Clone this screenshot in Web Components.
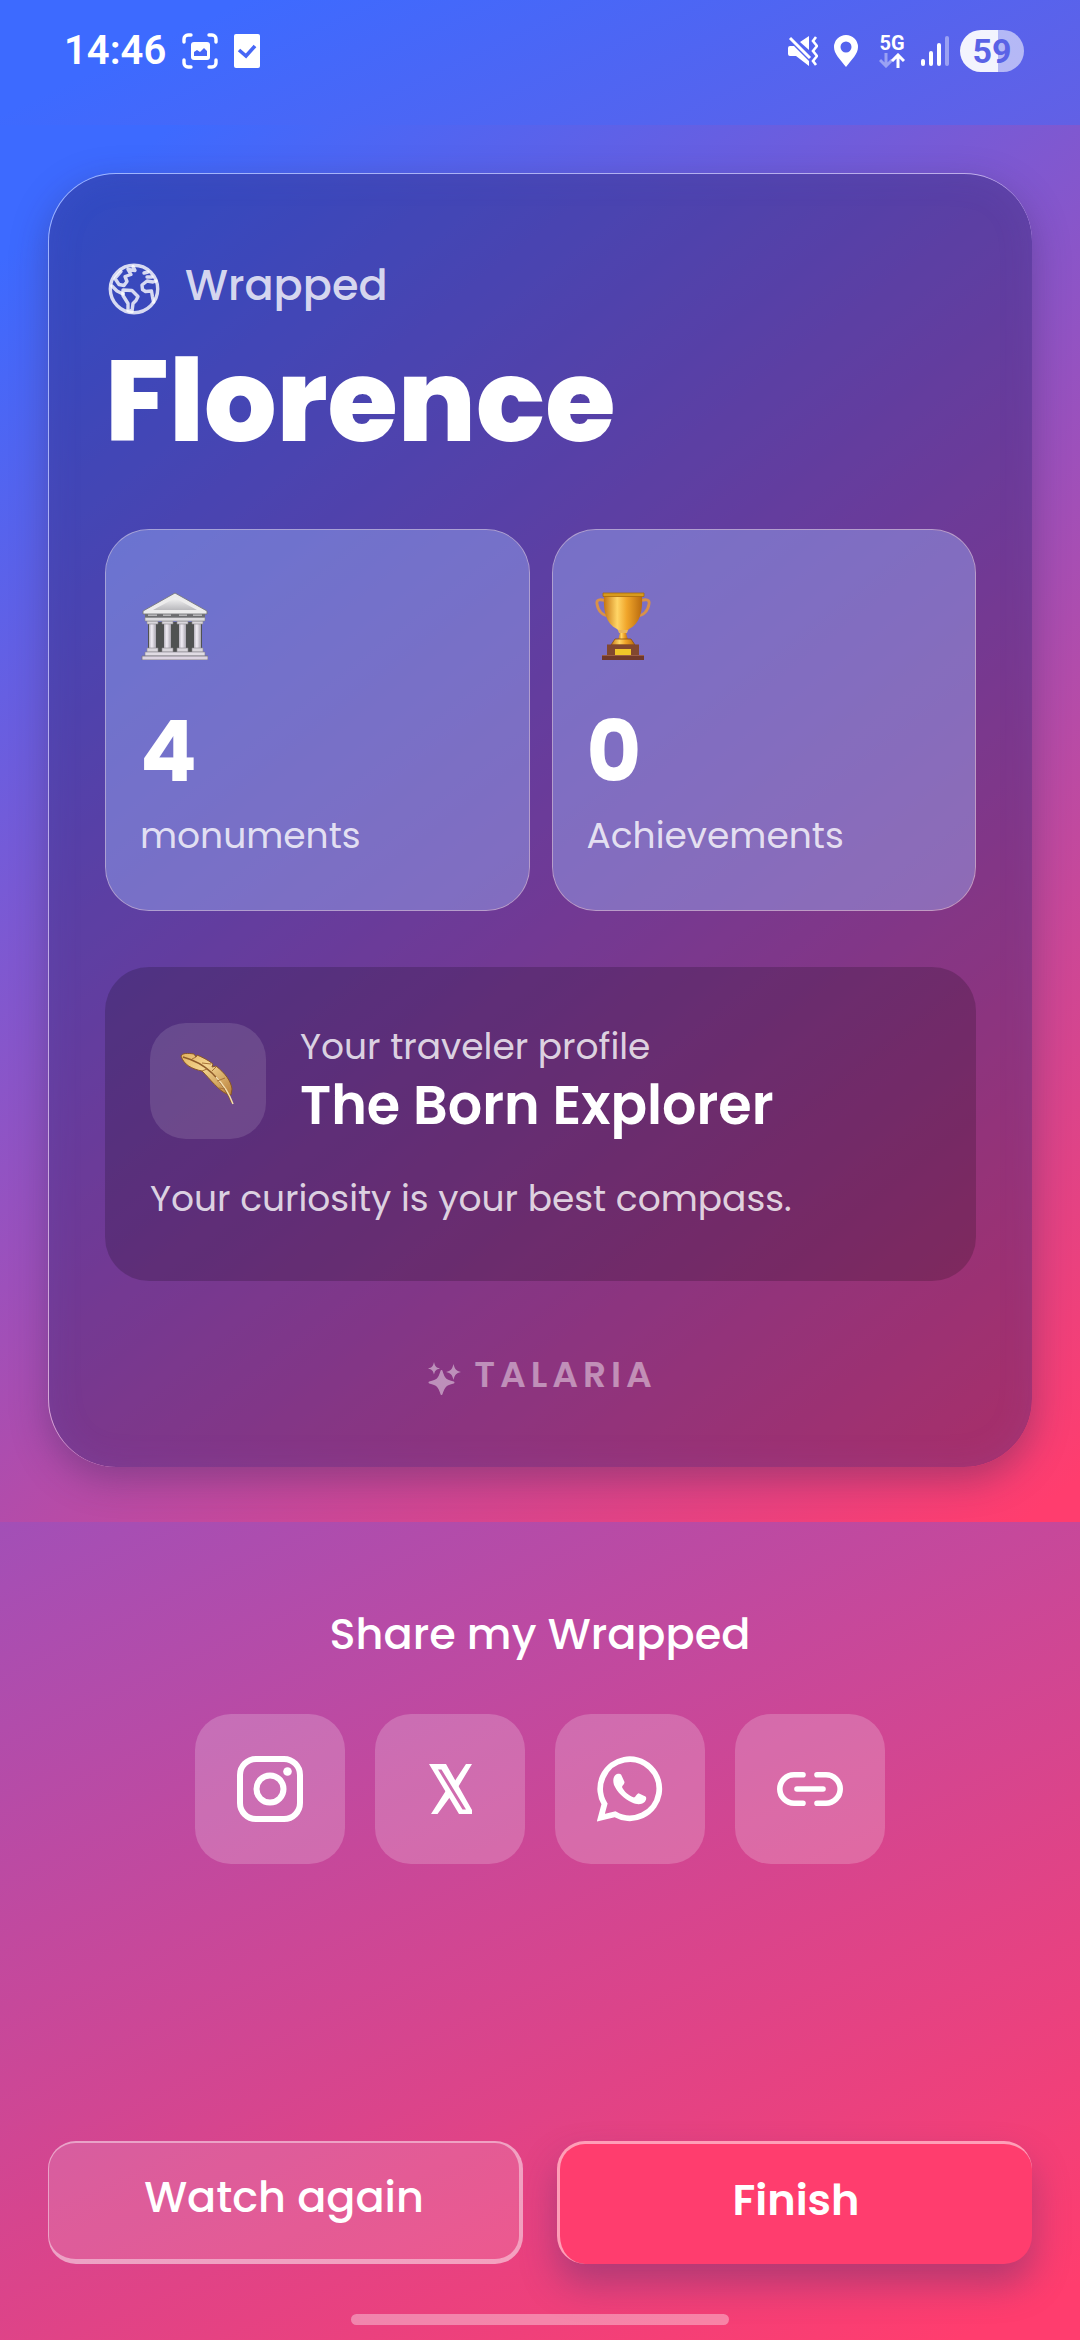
<!DOCTYPE html>
<html lang="en">
<head>
<meta charset="UTF-8">
<meta name="viewport" content="width=device-width, initial-scale=1">
<title>Florence Wrapped</title>
<style>
    :root {
        --blue: #3d6aff;
        --purple: #9d50bb;
        --pink: #ff3d6e;
        --soft: rgba(255, 255, 255, 0.8);
    }
    body {
        margin: 0;
        min-height: 100vh;
        display: flex;
        flex-direction: column;
        color: #fff;
        font-family: Poppins, Inter, sans-serif;
        background: linear-gradient(155deg, var(--blue) 4%, var(--purple) 51%, var(--pink) 98%);
    }
    main {
        flex: 1;
        display: flex;
        flex-direction: column;
    }
    svg { display: block; }
</style>
</head>
<body>
<status-bar time="14:46" battery="59"></status-bar>
<main>
    <wrapped-card label="Wrapped" city="Florence" brand="TALARIA">
        <stat-tile value="4" label="monuments">
            <svg width="68" height="68" viewBox="0 0 68 68" aria-hidden="true">
                <defs>
                    <linearGradient id="stone" x1="0" y1="0" x2="0" y2="1">
                        <stop offset="0" stop-color="#f2f2f2"/>
                        <stop offset="1" stop-color="#b9b9bd"/>
                    </linearGradient>
                    <linearGradient id="column" x1="0" y1="0" x2="1" y2="0">
                        <stop offset="0" stop-color="#b8b4be"/>
                        <stop offset="0.4" stop-color="#f1edf5"/>
                        <stop offset="1" stop-color="#aaa6b0"/>
                    </linearGradient>
                </defs>
                <path d="M8 30h54v30H8z" fill="#505252"/>
                <g fill="url(#column)">
                    <path d="M9 31h7v28H9z"/>
                    <path d="M24 31h7v28h-7z"/>
                    <path d="M39 31h7v28h-7z"/>
                    <path d="M54 31h7v28h-7z"/>
                </g>
                <g fill="#d9d6dc" stroke="#8d8a92" stroke-width="0.6">
                    <path d="M7 29h11v3H7zM22 29h11v3H22zM37 29h11v3H37zM52 29h11v3H52z"/>
                    <path d="M7 56h11v4H7zM22 56h11v4H22zM37 56h11v4H37zM52 56h11v4H52z"/>
                </g>
                <path d="M5 22h60v4H5z" fill="#6d6e70"/>
                <path d="M8 23h9M23 23h8M39 23h8M53 23h9" stroke="#b7b7b9" stroke-width="2"/>
                <path d="M5 25.500h60v3.500H5z" fill="#dcdbde" stroke="#858488" stroke-width="0.6"/>
                <path d="M35 1L67 19v3H3v-3z" fill="#ececec" stroke="#77787a" stroke-width="0.9"/>
                <path d="M35 6L57 18H13z" fill="url(#stone)"/>
                <path d="M5 60h60v4H5z" fill="#e0dce4" stroke="#85828a" stroke-width="0.6"/>
                <path d="M2 64h66v4H2z" fill="#dcd4e2" stroke="#77747c" stroke-width="0.8"/>
            </svg>
        </stat-tile>
        <stat-tile value="0" label="Achievements">
            <svg width="68" height="68" viewBox="0 0 68 68" aria-hidden="true">
                <defs>
                    <linearGradient id="gold" x1="0" y1="0" x2="1" y2="0">
                        <stop offset="0" stop-color="#c67512"/>
                        <stop offset="0.35" stop-color="#ffd566"/>
                        <stop offset="0.6" stop-color="#f0a52a"/>
                        <stop offset="1" stop-color="#b86a0e"/>
                    </linearGradient>
                </defs>
                <path d="M18 8.500C13 7 9 7.500 10 12c1 7 6 12 12 12" fill="none" stroke="#d8914a" stroke-width="2.800"/>
                <path d="M54 8.500c5-1.500 9-1 8 3.500-1 7-6 12-12 12" fill="none" stroke="#d8914a" stroke-width="2.800"/>
                <path d="M17 3h38c1 16-2 29-13 34l-3 3h-6l-3-3C19 32 16 19 17 3z" fill="url(#gold)"/>
                <path d="M16 1h41v3.500H16z" fill="#d89a1c" stroke="#a8690b" stroke-width="0.8"/>
                <path d="M31 38h10l-1 3h-8z" fill="#e9b65c"/>
                <path d="M33 41h6l2 7H31z" fill="url(#gold)"/>
                <path d="M28 47h16l4 6H24z" fill="url(#gold)" stroke="#8a4c0c" stroke-width="0.8"/>
                <path d="M20 52.500h32V65H20z" fill="#82472f"/>
                <path d="M15 63h42v5H15z" fill="#70382a"/>
                <path d="M15 63.500h42" stroke="#9b5c45" stroke-width="1"/>
                <path d="M28 57h16v6H28z" fill="#f0c429"/>
            </svg>
        </stat-tile>
        <traveler-profile slot="profile" label="Your traveler profile" name="The Born Explorer">
            <svg slot="icon" width="56" height="56" viewBox="0 0 56 56" aria-hidden="true">
                <defs>
                    <linearGradient id="feather" x1="0" y1="0" x2="1" y2="1">
                        <stop offset="0" stop-color="#e3b25f"/>
                        <stop offset="0.4" stop-color="#f3d490"/>
                        <stop offset="1" stop-color="#b9803a"/>
                    </linearGradient>
                </defs>
                <path d="M1 3C2 0 8 0 14 1l2 3 1-2c5 2 11 5 16 9l-1 3 4-1c9 7 15 15 16 23l-1 6-4-1c-8-3-17-15-25-23C12 16 4 12 1 3z" fill="url(#feather)" stroke="#8a5626" stroke-width="1"/>
                <path d="M3 4c15 4 36 15 49 46" fill="none" stroke="#8f5b2a" stroke-width="1.500"/>
                <path d="M36 24c8 8 13 16 17 27" fill="none" stroke="#f4dfae" stroke-width="1.500"/>
                <path d="M12 6l4-2M22 10l9 1M32 18l4-4M22 18l5-2M37 28l8-3M39 35l6 1" stroke="#a87338" stroke-width="1"/>
            </svg>
            Your curiosity is your best compass.
        </traveler-profile>
    </wrapped-card>

    <share-section heading="Share my Wrapped">
        <share-button label="Instagram">
            <svg width="66" height="66" viewBox="0 0 66 66" fill="none" stroke="#fff" stroke-width="6" aria-hidden="true">
                <rect x="3" y="3" width="60" height="60" rx="16"/>
                <circle cx="33" cy="33" r="13.500"/>
                <circle cx="50.500" cy="15.500" r="4.300" fill="#fff" stroke="none"/>
            </svg>
        </share-button>
        <share-button label="X">
            <svg width="43" height="50" viewBox="0 0 43 50" fill="#fff" aria-hidden="true">
                <path fill-rule="evenodd" d="M0 0h17l26 46v4H30zM9 5.500l24.500 40H37L12.500 5.500z"/>
                <path d="M37 0h6L28.500 24l-3-6.500zM2 50h6.500L21 33l-4-6.500z"/>
            </svg>
        </share-button>
        <share-button label="WhatsApp">
            <svg width="66" height="66" viewBox="0 0 66 66" aria-hidden="true">
                <path d="M3.800 61.700L7.500 48A29.500 29.500 0 1 1 18 58.300z" fill="none" stroke="#fff" stroke-width="5.800"/>
                <path d="M19 18.500c1-.8 4-1 5.200.2L27.500 26c.3 1.500-2 3.500-2.500 5 1.500 4 7 9 12 10.500 1.500-.5 3-4 4.500-4.300l7 3.300c1.500 1 .5 4.500-1.500 6-3 2.500-8 2-12 0-8-3.500-15-10.500-18-17.500-1.500-5-.5-8.500 2-10.500z" fill="#fff"/>
            </svg>
        </share-button>
        <share-button label="Copy link">
            <svg width="66" height="34" viewBox="0 0 66 34" fill="none" stroke="#fff" stroke-width="5.600" stroke-linecap="round" aria-hidden="true">
                <path d="M26 2.800h-9a14.200 14.200 0 0 0 0 28.400h9M40 2.800h9a14.200 14.200 0 0 1 0 28.400h-9M20 17h26"/>
            </svg>
        </share-button>
    </share-section>

    <action-bar>
        <action-button>Watch again</action-button>
        <action-button primary>Finish</action-button>
    </action-bar>
</main>
<home-indicator></home-indicator>

<script>
// 1. Phone status bar
class StatusBar extends HTMLElement {
    constructor() {
        super();
        this.attachShadow({ mode: 'open' });
    }

    connectedCallback() {
        const time = this.getAttribute('time') || '';
        const battery = this.getAttribute('battery') || '';

        this.shadowRoot.innerHTML = `
        <style>
            :host {
                display: flex;
                align-items: center;
                justify-content: space-between;
                box-sizing: border-box;
                height: 125px;
                padding: 0 56px 24px 64px;
                font-family: Roboto, sans-serif;
            }
            svg { display: block; }
            .left, .right { display: flex; align-items: center; }
            .left { gap: 16px; }
            .time { font-size: 40px; font-weight: 600; line-height: 48px; }
            .right { gap: 16px; }
            .network {
                display: grid;
                justify-items: center;
                width: 26px;
                margin-left: 5px;
            }
            .network span { font-size: 20px; font-weight: 700; line-height: 20px; }
            .battery {
                width: 64px;
                margin-left: -5px;
                border-radius: 21px;
                color: #5a63e6;
                font-size: 34px;
                font-weight: 700;
                line-height: 42px;
                text-align: center;
                background: linear-gradient(90deg, rgba(255,255,255,.93) 59%, rgba(255,255,255,.55) 59%);
            }
        </style>
        <div class="left">
            <span class="time">${time}</span>
            <svg width="36" height="36" viewBox="0 0 36 36" aria-hidden="true">
                <path d="M2 9V6a4 4 0 0 1 4-4h3M27 2h3a4 4 0 0 1 4 4v3M34 27v3a4 4 0 0 1-4 4h-3M9 34H6a4 4 0 0 1-4-4v-3" fill="none" stroke="#fff" stroke-width="3.400" stroke-linecap="round"/>
                <rect x="9" y="9" width="19" height="18" rx="3" fill="#fff"/>
                <path d="M12 23v-4l3-2 3 2 4-4 3 3v5z" fill="#4666f8"/>
            </svg>
            <svg width="26" height="34" viewBox="0 0 26 34" aria-hidden="true">
                <rect width="26" height="34" rx="2" fill="#fff"/>
                <path d="M5 16l7 6 9-10" fill="none" stroke="#4767f6" stroke-width="3.600"/>
            </svg>
        </div>
        <div class="right">
            <svg width="30" height="30" viewBox="0 0 30 30" fill="#fff" aria-hidden="true">
                <path d="M2 10h4l15 15v5L8 20H2q-2 0-2-2v-6q0-2 2-2zM21 0v14l-9-8z"/>
                <path d="M2 2l20 20" stroke="#fff" stroke-width="3"/>
                <path d="M28 1l-3 4 4 5-4 5 4 5-4 5 3 4" fill="none" stroke="#fff" stroke-width="2.600"/>
            </svg>
            <svg width="24" height="32" viewBox="0 0 24 32" aria-hidden="true">
                <path fill="#fff" fill-rule="evenodd" d="M12 0a12 12 0 0 1 12 12c0 7-6 12-12 20C6 24 0 19 0 12A12 12 0 0 1 12 0zm0 6.500a5.500 5.500 0 1 0 0 11 5.500 5.500 0 0 0 0-11z"/>
            </svg>
            <div class="network">
                <span>5G</span>
                <svg width="26" height="15" viewBox="0 0 26 15" fill="none" stroke="#fff" stroke-width="3" aria-hidden="true">
                    <path d="M7 0v13M1 7l6 6 6-6" opacity="0.4"/>
                    <path d="M19 15V2M13 8l6-6 6 6"/>
                </svg>
            </div>
            <svg width="28" height="30" viewBox="0 0 28 30" fill="#fff" aria-hidden="true">
                <rect y="23" width="4" height="7" rx="2"/>
                <rect x="8" y="15" width="4" height="15" rx="2"/>
                <rect x="16" y="7" width="4" height="23" rx="2"/>
                <rect x="24" width="4" height="30" rx="2" opacity="0.4"/>
            </svg>
            <span class="battery">${battery}</span>
        </div>
        `;
    }
}
customElements.define('status-bar', StatusBar);

// 2. Recap card with the city name, the stats and the profile
class WrappedCard extends HTMLElement {
    constructor() {
        super();
        this.attachShadow({ mode: 'open' });
    }

    connectedCallback() {
        const label = this.getAttribute('label') || '';
        const city = this.getAttribute('city') || '';
        const brand = this.getAttribute('brand') || '';

        this.shadowRoot.innerHTML = `
        <style>
            :host {
                display: block;
                overflow: hidden;
                padding: 48px 48px 55px;
                background: linear-gradient(142deg, var(--blue) 6%, var(--purple) 52%, var(--pink) 98%);
            }
            article {
                padding: 79px 56px 68px;
                border: solid rgba(255, 255, 255, 0.5);
                border-width: 1px 0 0 1px;
                border-radius: 68px;
                background: rgba(30, 22, 90, 0.37);
                background-clip: padding-box;
                box-shadow:
                    0 12px 36px rgba(50, 40, 90, 0.36),
                    inset 0 0 36px rgba(120, 110, 220, 0.12);
            }
            svg { display: block; }
            .label {
                display: flex;
                align-items: flex-end;
                gap: 24px;
                height: 64px;
                margin: 0;
                color: var(--soft);
                font-size: 43px;
                font-weight: 500;
                line-height: 64px;
            }
            h1 {
                margin: 20px 0 64px;
                font-size: 114px;
                font-weight: 800;
                line-height: 128px;
            }
            .stats {
                display: grid;
                grid-template-columns: 1fr 1fr;
                gap: 22px;
                margin-bottom: 56px;
            }
            .brand {
                display: flex;
                align-items: flex-end;
                justify-content: center;
                gap: 10px;
                margin-top: 70px;
                opacity: 0.45;
                font-size: 36px;
                font-weight: 600;
                line-height: 48px;
                letter-spacing: 5px;
            }
        </style>
        <article>
            <p class="label">
                <svg width="56" height="56" viewBox="0 0 56 56" fill="none" stroke="currentColor" stroke-width="3.400" stroke-linejoin="round" stroke-linecap="round" aria-hidden="true">
                    <g transform="translate(1 0)">
                        <circle cx="28" cy="28" r="23.700"/>
                        <path d="M27 5.500l2 4-7-1 3 5-6 2 2 5-3 4-5-1-4-6 6-7M6 25l5 5 6 3"/>
                        <path d="M17 29l9 .5 6 6-2 4-3 3-1 8-4-1v-7l-5-8z"/>
                        <path d="M50 20l-3 1-6-1-5 4 .5 4.500 3 2 6-.5 1 6 1 5M38 12l4-1M41 16h5"/>
                    </g>
                </svg>
                ${label}
            </p>
            <h1>${city}</h1>
            <div class="stats"><slot></slot></div>
            <slot name="profile"></slot>
            <div class="brand">
                <svg width="40" height="40" viewBox="0 0 40 40" fill="currentColor" aria-hidden="true">
                    <path d="M17.500 12c2.500 8.500 4 9.500 12 11.500-8 2-9.500 3.500-12 11.500-2.500-8-4-9.500-12-11.500 8-2 9.500-3 12-11.500z" stroke="currentColor" stroke-width="2" stroke-linejoin="round"/>
                    <path d="M10 3c1 4.500 2 5.500 6 6.500-4 1-5 2-6 6-1-4-2-5-6-6 4-1 5-2 6-6.500zM29.500 5c1.300 5.500 2.500 6.500 7.500 8-5 1.500-6.200 2.500-7.500 8-1.300-5.500-2.500-6.500-7.500-8 5-1.500 6.200-2.500 7.500-8z"/>
                </svg>
                <span>${brand}</span>
            </div>
        </article>
        `;
    }
}
customElements.define('wrapped-card', WrappedCard);

// 3. One number of the trip
class StatTile extends HTMLElement {
    constructor() {
        super();
        this.attachShadow({ mode: 'open' });
    }

    connectedCallback() {
        this.shadowRoot.innerHTML = `
        <style>
            :host {
                display: block;
                padding: 62px 34px 50px;
                border: 1px solid rgba(255, 255, 255, 0.5);
                border-radius: 44px;
                background: rgba(158, 180, 250, 0.42);
                background-clip: padding-box;
            }
            .value {
                margin-top: 44px;
                font-size: 84px;
                font-weight: 700;
                line-height: 96px;
            }
            .label {
                margin-top: 12px;
                color: var(--soft);
                font-size: 36px;
                line-height: 48px;
            }
        </style>
        <slot></slot>
        <div class="value">${this.getAttribute('value') || ''}</div>
        <div class="label">${this.getAttribute('label') || ''}</div>
        `;
    }
}
customElements.define('stat-tile', StatTile);

// 4. Traveler profile
class TravelerProfile extends HTMLElement {
    constructor() {
        super();
        this.attachShadow({ mode: 'open' });
    }

    connectedCallback() {
        this.shadowRoot.innerHTML = `
        <style>
            :host {
                display: block;
                padding: 56px 45px 54px;
                border-radius: 44px;
                background: rgba(0, 0, 0, 0.18);
            }
            .head {
                display: flex;
                gap: 34px;
                margin-bottom: 32px;
            }
            .icon {
                display: grid;
                place-items: center;
                width: 116px;
                height: 116px;
                border-radius: 36px;
                background: rgba(255, 255, 255, 0.12);
            }
            .label, .text {
                color: var(--soft);
                font-size: 36px;
                line-height: 48px;
            }
            h2 {
                margin: 0;
                font-size: 54px;
                font-weight: 600;
                line-height: 68px;
            }
            .text { line-height: 56px; }
        </style>
        <div class="head">
            <div class="icon"><slot name="icon"></slot></div>
            <div>
                <div class="label">${this.getAttribute('label') || ''}</div>
                <h2>${this.getAttribute('name') || ''}</h2>
            </div>
        </div>
        <div class="text"><slot></slot></div>
        `;
    }
}
customElements.define('traveler-profile', TravelerProfile);

// 5. Sharing
class ShareSection extends HTMLElement {
    constructor() {
        super();
        this.attachShadow({ mode: 'open' });
    }

    connectedCallback() {
        this.shadowRoot.innerHTML = `
        <style>
            :host {
                display: block;
                padding: 80px 48px;
            }
            h2 {
                margin: 0 0 48px;
                font-size: 43px;
                font-weight: 500;
                line-height: 64px;
                text-align: center;
            }
            .buttons {
                display: flex;
                justify-content: center;
                gap: 30px;
            }
        </style>
        <h2>${this.getAttribute('heading') || ''}</h2>
        <div class="buttons"><slot></slot></div>
        `;
    }
}
customElements.define('share-section', ShareSection);

class ShareButton extends HTMLElement {
    constructor() {
        super();
        this.attachShadow({ mode: 'open' });
    }

    connectedCallback() {
        this.shadowRoot.innerHTML = `
        <style>
            :host { display: block; }
            button {
                display: grid;
                place-items: center;
                width: 150px;
                height: 150px;
                padding: 0;
                border: 0;
                border-radius: 36px;
                background: rgba(255, 255, 255, 0.2);
                cursor: pointer;
            }
        </style>
        <button type="button" aria-label="${this.getAttribute('label') || ''}"><slot></slot></button>
        `;
    }
}
customElements.define('share-button', ShareButton);

// 6. Bottom actions
class ActionBar extends HTMLElement {
    constructor() {
        super();
        this.attachShadow({ mode: 'open' });
    }

    connectedCallback() {
        this.shadowRoot.innerHTML = `
        <style>
            :host {
                display: grid;
                grid-template-columns: 1fr 1fr;
                gap: 34px;
                margin-top: auto;
                padding: 0 48px 50px;
            }
        </style>
        <slot></slot>
        `;
    }
}
customElements.define('action-bar', ActionBar);

class ActionButton extends HTMLElement {
    constructor() {
        super();
        this.attachShadow({ mode: 'open' });
    }

    connectedCallback() {
        this.shadowRoot.innerHTML = `
        <style>
            :host { display: block; }
            button {
                display: block;
                width: 100%;
                height: 123px;
                padding: 0 0 8px;
                border: solid rgba(255, 255, 255, 0.5);
                border-width: 2px 4px 5px 1px;
                border-radius: 28px;
                color: #fff;
                font: inherit;
                font-size: 43px;
                font-weight: 500;
                line-height: 64px;
                background: rgba(255, 255, 255, 0.13);
                background-clip: padding-box;
                cursor: pointer;
            }
            :host([primary]) button {
                border-width: 3px 0 0 3px;
                font-weight: 600;
                background: var(--pink);
                box-shadow: 0 20px 36px rgba(100, 50, 110, 0.45);
            }
        </style>
        <button type="button"><slot></slot></button>
        `;
    }
}
customElements.define('action-button', ActionButton);

// 7. Gesture handle
class HomeIndicator extends HTMLElement {
    constructor() {
        super();
        this.attachShadow({ mode: 'open' });
    }

    connectedCallback() {
        this.shadowRoot.innerHTML = `
        <style>
            :host {
                display: block;
                width: 35%;
                height: 11px;
                margin: 0 auto 15px;
                border-radius: 6px;
                background: rgba(255, 255, 255, 0.36);
            }
        </style>
        `;
    }
}
customElements.define('home-indicator', HomeIndicator);
</script>
</body>
</html>
